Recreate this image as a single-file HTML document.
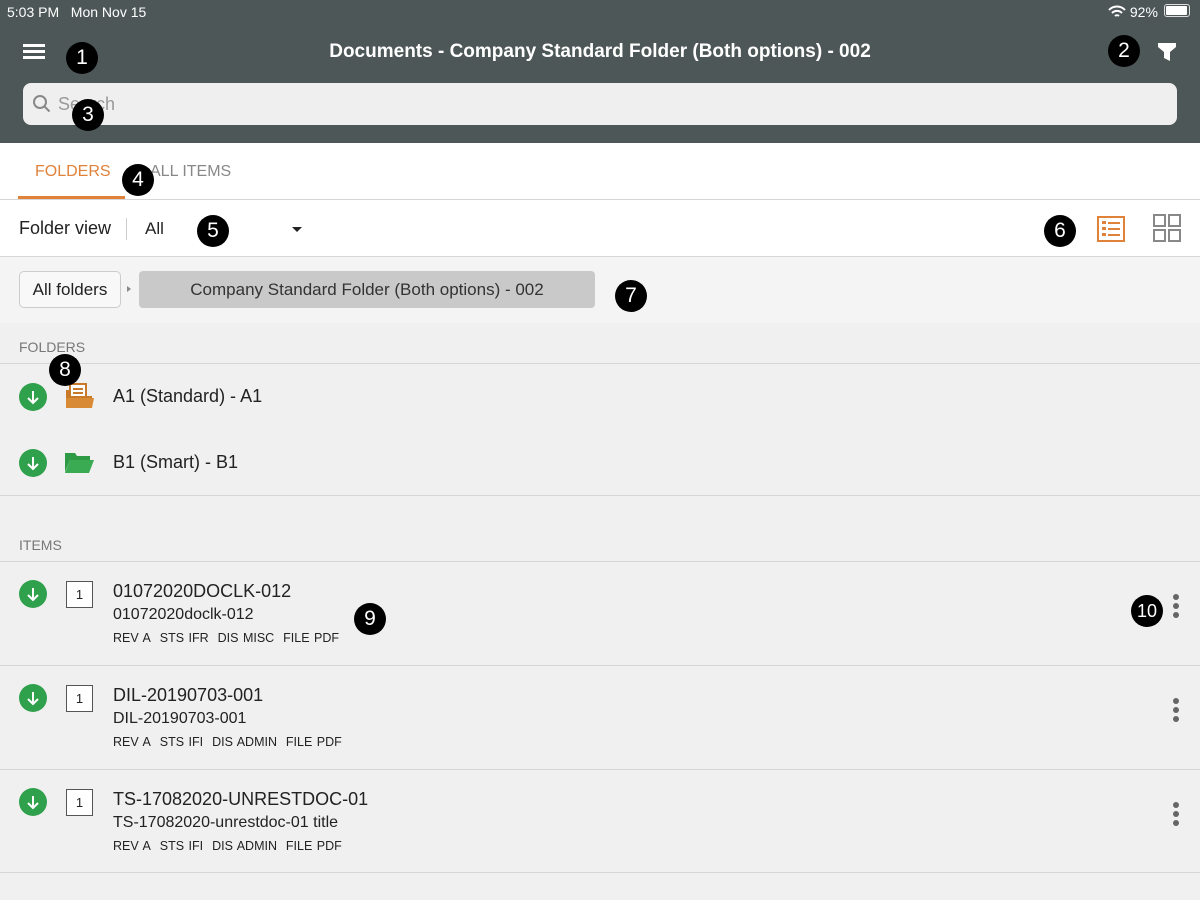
<!DOCTYPE html>
<html><head><meta charset="utf-8"><style>
*{margin:0;padding:0;box-sizing:border-box}
body{width:1200px;height:900px;overflow:hidden;background:#f0f0f0;font-family:"Liberation Sans",sans-serif;position:relative;color:#222}
.a{position:absolute}
.hdr{left:0;top:0;width:1200px;height:143px;background:#4e5757}
.b{position:absolute;width:32px;height:32px;border-radius:50%;background:#000;color:#fff;font-size:21px;text-align:center;line-height:32px}
.line{position:absolute;left:0;width:1200px;height:1px;background:#d6d6d6}
.dl{position:absolute;left:19px;width:28px;height:28px;border-radius:50%;background:#2fa04b}
.lbl{position:absolute;left:19px;font-size:14px;color:#777}
.t1{position:absolute;left:113px;font-size:18px;color:#222}
.t2{position:absolute;left:113px;font-size:16px;color:#222}
.t3{position:absolute;left:113px;font-size:12.5px;color:#222;word-spacing:1px}
.box{position:absolute;left:66px;width:27px;height:27px;border:1px solid #555;background:#fff;font-size:13px;text-align:center;line-height:25px}
.dots{position:absolute;left:1173px;width:6px}
.dots i{display:block;width:6px;height:6px;border-radius:50%;background:#666;margin-bottom:3px}
</style></head><body>
<div class="a hdr"></div>
<div class="a" style="left:7px;top:4px;color:#fff;font-size:14px">5:03 PM&nbsp;&nbsp; Mon Nov 15</div>
<div class="a" style="left:1108px;top:4px;color:#fff;font-size:14px">
<svg width="18" height="13" viewBox="0 0 18 13" style="vertical-align:-1px"><path d="M1 5a11 11 0 0 1 16 0M4 8a7 7 0 0 1 10 0M7 11a3 3 0 0 1 4 0" stroke="#fff" stroke-width="2" fill="none"/></svg> 92%</div>
<div class="a" style="left:1164px;top:4px;width:26px;height:13px;border:1px solid #ddd;border-radius:3px;padding:1px"><div style="width:21px;height:9px;background:#fff;border-radius:1px"></div></div>
<div class="a" style="left:23px;top:44px;width:22px;height:3px;background:#fff;box-shadow:0 6px 0 #fff,0 12px 0 #fff"></div>
<div class="a" style="left:0;width:1200px;top:41px;text-align:center;color:#fff;font-size:19px;font-weight:bold">Documents - Company Standard Folder (Both options) - 002</div>
<svg class="a" style="left:1157px;top:42px" width="20" height="20" viewBox="0 0 20 20"><path d="M1 1h18v4l-6 5v9l-6-3v-6l-6-5z" fill="#fff"/></svg>
<div class="a" style="left:23px;top:83px;width:1154px;height:42px;background:#efefef;border-radius:8px"></div>
<svg class="a" style="left:32px;top:94px" width="20" height="20" viewBox="0 0 20 20"><circle cx="8" cy="8" r="6" stroke="#888" stroke-width="2" fill="none"/><path d="M12.5 12.5l5 5" stroke="#888" stroke-width="2"/></svg>
<div class="a" style="left:58px;top:94px;color:#999;font-size:18px">Search</div>

<div class="a" style="left:0;top:143px;width:1200px;height:57px;background:#fff"></div>
<div class="a" style="left:35px;top:163px;color:#e0823a;font-size:16px">FOLDERS</div>
<div class="a" style="left:18px;top:196px;width:107px;height:3px;background:#e0823a"></div>
<div class="a" style="left:150px;top:163px;color:#888;font-size:16px">ALL ITEMS</div>
<div class="line" style="top:199px"></div>
<div class="a" style="left:0;top:200px;width:1200px;height:56px;background:#fff"></div>
<div class="a" style="left:19px;top:218px;font-size:18px">Folder view</div>
<div class="a" style="left:126px;top:218px;width:1px;height:22px;background:#ccc"></div>
<div class="a" style="left:145px;top:219px;font-size:17px">All</div>
<div class="a" style="left:292px;top:227px;border:5px solid transparent;border-top:5px solid #222;border-bottom:0"></div>
<div class="a" style="left:1097px;top:216px;width:28px;height:26px;border:2px solid #e0823a"></div>
<div class="a" style="left:1102px;top:221px;width:4px;height:3px;background:#e0823a;box-shadow:0 6px 0 #e0823a,0 12px 0 #e0823a"></div>
<div class="a" style="left:1108px;top:221px;width:12px;height:2px;margin-top:1px;background:#e0823a;box-shadow:0 6px 0 #e0823a,0 12px 0 #e0823a"></div>
<div class="a" style="left:1153px;top:214px;width:13px;height:13px;border:2px solid #888"></div>
<div class="a" style="left:1168px;top:214px;width:13px;height:13px;border:2px solid #888"></div>
<div class="a" style="left:1153px;top:229px;width:13px;height:13px;border:2px solid #888"></div>
<div class="a" style="left:1168px;top:229px;width:13px;height:13px;border:2px solid #888"></div>
<div class="line" style="top:256px"></div>
<div class="a" style="left:0;top:257px;width:1200px;height:66px;background:#f4f4f4"></div>
<div class="a" style="left:19px;top:271px;width:102px;height:37px;border:1px solid #ccc;border-radius:5px;background:#f8f8f8;font-size:17px;text-align:center;line-height:35px">All folders</div>
<div class="a" style="left:127px;top:286px;border:3px solid transparent;border-left:4px solid #888;border-right:0"></div>
<div class="a" style="left:139px;top:271px;width:456px;height:37px;border-radius:4px;background:#c9c9c9;font-size:17px;text-align:center;line-height:37px;color:#333">Company Standard Folder (Both options) - 002</div>
<div class="lbl" style="top:339px">FOLDERS</div>
<div class="line" style="top:363px"></div>

<div class="dl" style="top:383px"></div><svg class="a" style="left:19px;top:383px" width="28" height="28"><path d="M14 8v12M9 15l5 5 5-5" stroke="#fff" stroke-width="2" fill="none"/></svg>
<svg class="a" style="left:64px;top:382px" width="30" height="28" viewBox="0 0 30 28"><rect x="6" y="2" width="16" height="14" fill="#fff" stroke="#c87a28" stroke-width="2"/><path d="M9 7h10M9 11h10" stroke="#c87a28" stroke-width="2"/><path d="M2 8h4v6h22v12H2z" fill="#c87a28"/><path d="M2 16h28l-2 10H2z" fill="#d88a35"/></svg>
<div class="t1" style="top:386px">A1 (Standard) - A1</div>
<div class="dl" style="top:449px"></div><svg class="a" style="left:19px;top:449px" width="28" height="28"><path d="M14 8v12M9 15l5 5 5-5" stroke="#fff" stroke-width="2" fill="none"/></svg>
<svg class="a" style="left:64px;top:450px" width="30" height="26" viewBox="0 0 30 26"><path d="M1 3h10l2 3h13v4H6L1 22z" fill="#2f9a45"/><path d="M6 10h24l-5 13H1z" fill="#3aab52"/></svg>
<div class="t1" style="top:452px">B1 (Smart) - B1</div>
<div class="line" style="top:495px"></div>
<div class="lbl" style="top:537px">ITEMS</div>
<div class="line" style="top:561px"></div>

<div class="dl" style="top:580px"></div><svg class="a" style="left:19px;top:580px" width="28" height="28"><path d="M14 8v12M9 15l5 5 5-5" stroke="#fff" stroke-width="2" fill="none"/></svg>
<div class="box" style="top:581px">1</div>
<div class="t1" style="top:581px">01072020DOCLK-012</div>
<div class="t2" style="top:606px">01072020doclk-012</div>
<div class="t3" style="top:631px">REV A&nbsp; STS IFR&nbsp; DIS MISC&nbsp; FILE PDF</div>
<div class="dots" style="top:594px"><i></i><i></i><i></i></div>
<div class="line" style="top:665px"></div>

<div class="dl" style="top:684px"></div><svg class="a" style="left:19px;top:684px" width="28" height="28"><path d="M14 8v12M9 15l5 5 5-5" stroke="#fff" stroke-width="2" fill="none"/></svg>
<div class="box" style="top:685px">1</div>
<div class="t1" style="top:685px">DIL-20190703-001</div>
<div class="t2" style="top:710px">DIL-20190703-001</div>
<div class="t3" style="top:735px">REV A&nbsp; STS IFI&nbsp; DIS ADMIN&nbsp; FILE PDF</div>
<div class="dots" style="top:698px"><i></i><i></i><i></i></div>
<div class="line" style="top:769px"></div>

<div class="dl" style="top:788px"></div><svg class="a" style="left:19px;top:788px" width="28" height="28"><path d="M14 8v12M9 15l5 5 5-5" stroke="#fff" stroke-width="2" fill="none"/></svg>
<div class="box" style="top:789px">1</div>
<div class="t1" style="top:789px">TS-17082020-UNRESTDOC-01</div>
<div class="t2" style="top:814px">TS-17082020-unrestdoc-01 title</div>
<div class="t3" style="top:839px">REV A&nbsp; STS IFI&nbsp; DIS ADMIN&nbsp; FILE PDF</div>
<div class="dots" style="top:802px"><i></i><i></i><i></i></div>
<div class="line" style="top:872px"></div>

<div class="b" style="left:66px;top:42px">1</div>
<div class="b" style="left:1108px;top:35px">2</div>
<div class="b" style="left:72px;top:99px">3</div>
<div class="b" style="left:122px;top:164px">4</div>
<div class="b" style="left:197px;top:215px">5</div>
<div class="b" style="left:1044px;top:215px">6</div>
<div class="b" style="left:615px;top:280px">7</div>
<div class="b" style="left:49px;top:354px">8</div>
<div class="b" style="left:354px;top:603px">9</div>
<div class="b" style="left:1131px;top:595px;font-size:18px">10</div>
</body></html>
